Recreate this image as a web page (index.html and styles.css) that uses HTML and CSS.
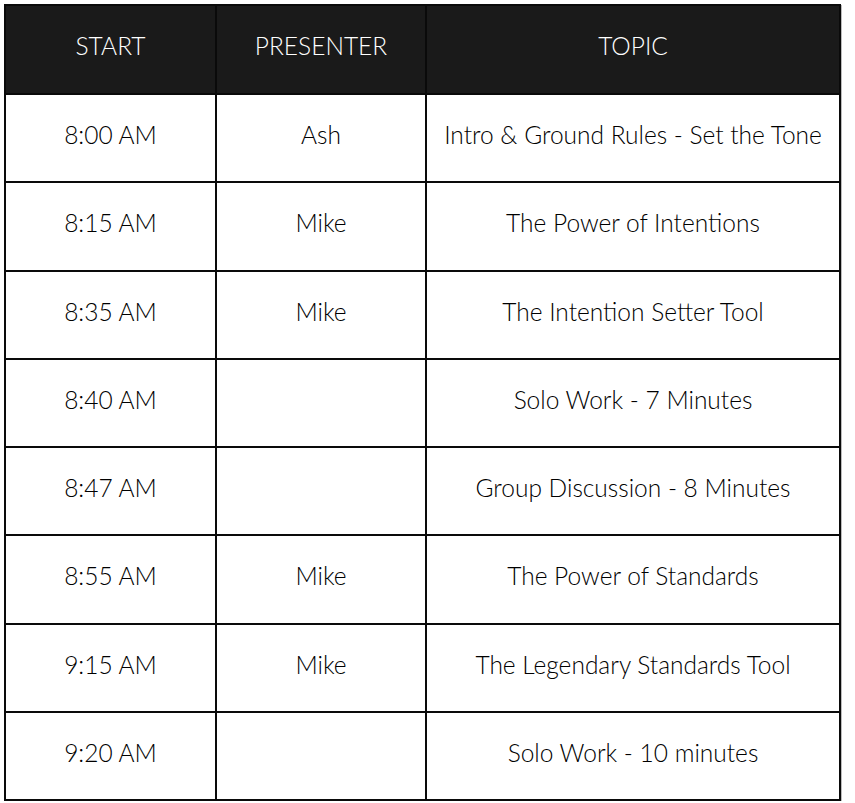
FILE: index.html
```html
<!DOCTYPE html>
<html>
<head>
<meta charset="utf-8">
<link rel="stylesheet" href="styles.css">
</head>
<body>
<table class="agenda">
  <colgroup><col class="c1"><col class="c2"><col class="c3"></colgroup>
  <thead>
    <tr><th>START</th><th>PRESENTER</th><th>TOPIC</th></tr>
  </thead>
  <tbody>
    <tr><td>8:00 AM</td><td>Ash</td><td>Intro &amp; Ground Rules - Set the Tone</td></tr>
    <tr><td>8:15 AM</td><td>Mike</td><td>The Power of Intentions</td></tr>
    <tr><td>8:35 AM</td><td>Mike</td><td>The Intention Setter Tool</td></tr>
    <tr><td>8:40 AM</td><td></td><td>Solo Work - 7 Minutes</td></tr>
    <tr><td>8:47 AM</td><td></td><td>Group Discussion - 8 Minutes</td></tr>
    <tr><td>8:55 AM</td><td>Mike</td><td>The Power of Standards</td></tr>
    <tr><td>9:15 AM</td><td>Mike</td><td>The Legendary Standards Tool</td></tr>
    <tr><td>9:20 AM</td><td></td><td>Solo Work - 10 minutes</td></tr>
  </tbody>
</table>
</body>
</html>
```
FILE: styles.css
```css
html, body { margin: 0; padding: 0; background: #fff; }
body { padding: 4px 0 0 4px; font-family: "Lato", "Open Sans", sans-serif; color: #000; }
.agenda {
  border-collapse: collapse;
  width: 835px;
  table-layout: fixed;
  box-shadow: 1px 1px 0 #bbb;
}
.c1 { width: 211px; }
.c2 { width: 210px; }
.c3 { width: 414px; }
.agenda th, .agenda td {
  border: 2px solid #0a0a0a;
  text-align: center;
  padding: 0 0 7px 0;
  font-size: 24.5px;
  font-weight: 300;
  line-height: 1.2;
}
.agenda th {
  background: #1a1a1a;
  color: #fff;
  height: 80px;
}
.agenda td { height: 79.3px; }
```
